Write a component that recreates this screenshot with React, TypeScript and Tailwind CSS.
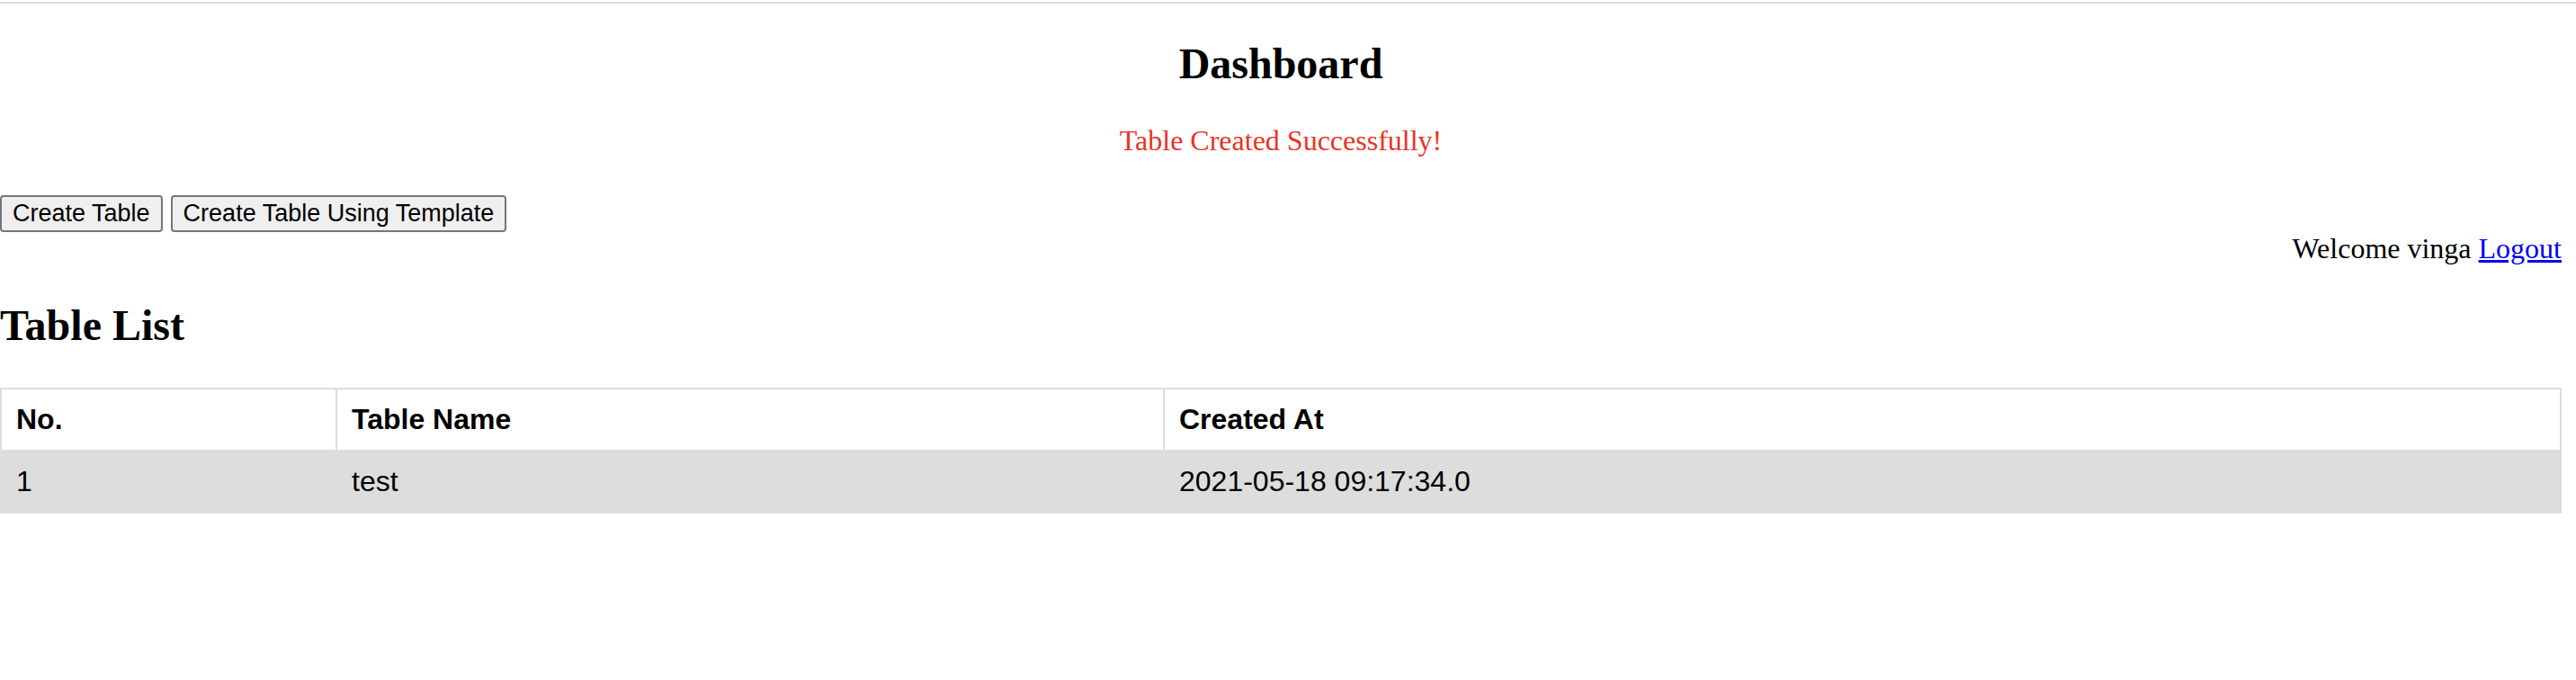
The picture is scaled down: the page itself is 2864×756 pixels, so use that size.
import React from 'react';

const TABLES = [{ no: 1, name: 'test', createdAt: '2021-05-18 09:17:34.0' }];

const serif = "font-['Liberation_Serif','Times_New_Roman',serif]";
const sans = "font-['Liberation_Sans',Arial,sans-serif]";

const App: React.FC = () => {
  return (
    <div className="w-[2848px] bg-white text-black pt-[2px] pb-[180px]">
      <div className="h-[2px] w-[2864px] bg-[#dcdce4]" />

      <h1 className={`${serif} mt-[39px] text-center text-[48px] leading-[56px] font-bold`}>Dashboard</h1>
      <p className={`${serif} mt-[39px] text-center text-[32px] leading-[37px] text-[#eb3323]`}>
        Table Created Successfully!
      </p>

      <div className="mt-[42px] flex gap-[9px]">
        <button className={`${sans} h-[41px] px-[12px] flex items-center border-2 border-[#767676] rounded-[4px] bg-[#efefef] text-[27px] leading-[31px]`}>
          Create Table
        </button>
        <button className={`${sans} h-[41px] px-[12px] flex items-center border-2 border-[#767676] rounded-[4px] bg-[#efefef] text-[27px] leading-[31px]`}>
          Create Table Using Template
        </button>
      </div>

      <div className={`${serif} text-right text-[32px] leading-[37px]`}>
        Welcome vinga{' '}
        <a href="#" className="text-[#0000ee] underline">
          Logout
        </a>
      </div>

      <h2 className={`${serif} mt-[39px] text-[48px] leading-[56px] font-bold`}>Table List</h2>

      <table className={`${sans} mt-[41px] w-[2848px] table-fixed border-collapse text-[32px] leading-[35px]`}>
        <colgroup>
          <col className="w-[373px]" />
          <col className="w-[920px]" />
          <col />
        </colgroup>
        <thead>
          <tr>
            <th className="border-2 border-[#dddddd] p-[16px] text-left font-bold">No.</th>
            <th className="border-2 border-[#dddddd] p-[16px] text-left font-bold">Table Name</th>
            <th className="border-2 border-[#dddddd] p-[16px] text-left font-bold">Created At</th>
          </tr>
        </thead>
        <tbody>
          {TABLES.map((t) => (
            <tr key={t.no} className="bg-[#dddddd]">
              <td className="border-2 border-[#dddddd] p-[16px]">{t.no}</td>
              <td className="border-2 border-[#dddddd] p-[16px]">{t.name}</td>
              <td className="border-2 border-[#dddddd] p-[16px]">{t.createdAt}</td>
            </tr>
          ))}
        </tbody>
      </table>
    </div>
  );
};

export default App;
